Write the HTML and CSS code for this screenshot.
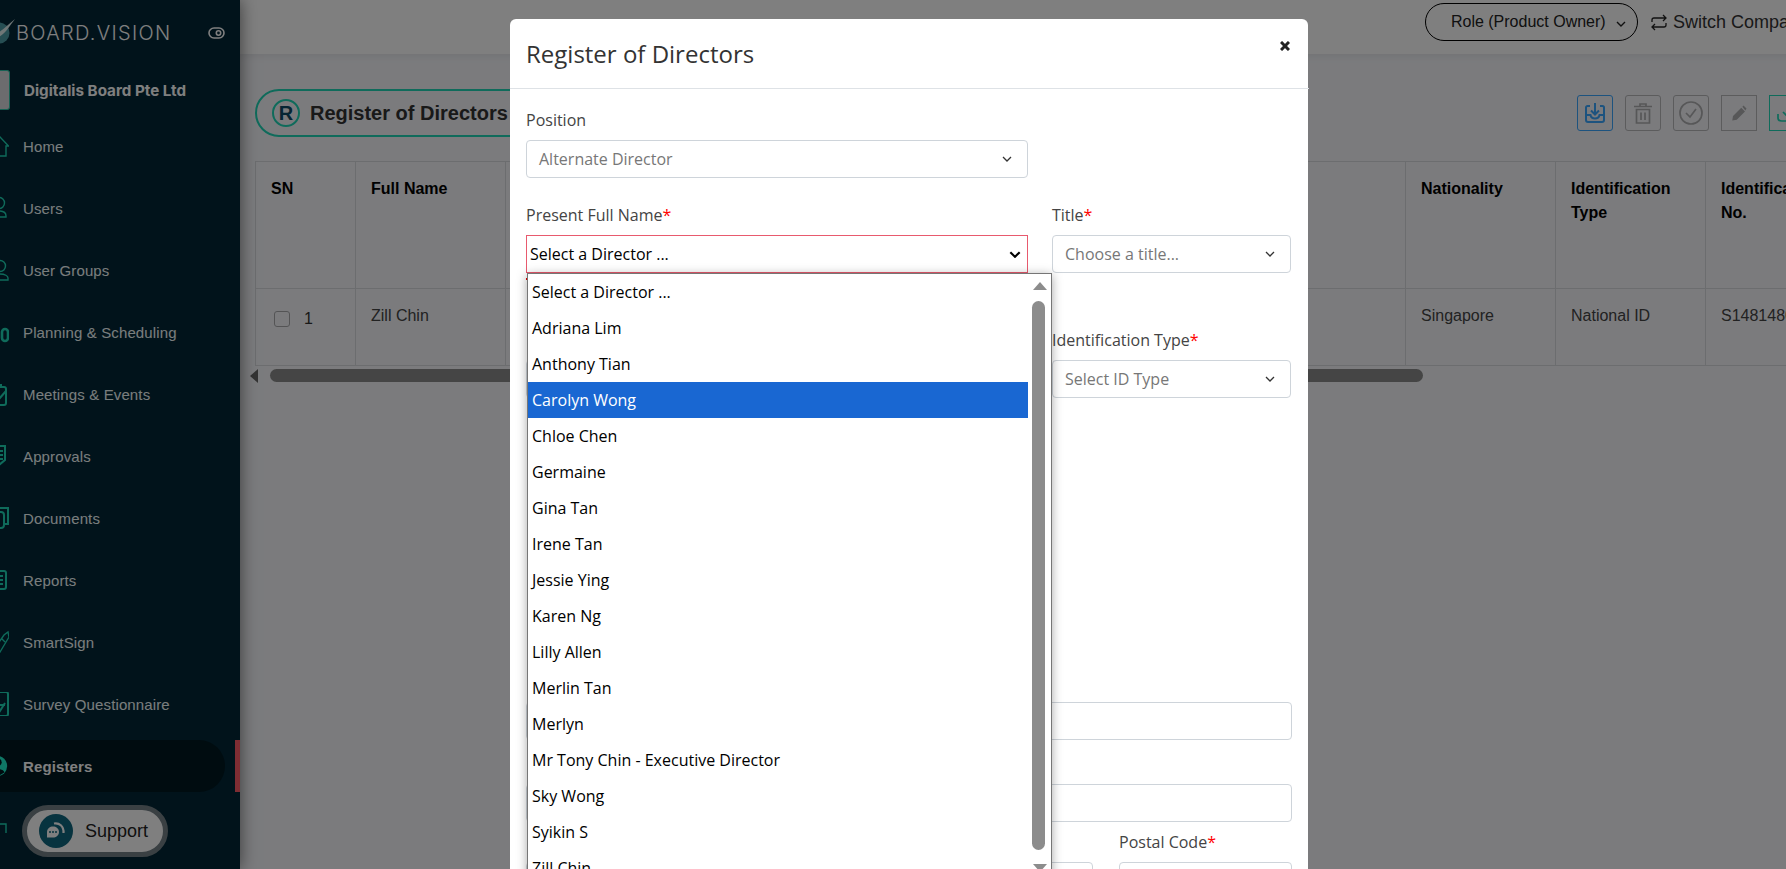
FILE: index.html
```html
<!DOCTYPE html>
<html lang="en">
<head>
<meta charset="utf-8">
<title>Register of Directors</title>
<link rel="stylesheet" href="styles.css">
</head>
<body>
<div class="app">
  <aside class="sidebar">
    <div class="brand">
      <svg class="brand-mark" viewBox="0 0 30 30"><circle cx="13" cy="17" r="10.5" class="brand-disc"/><path d="M3 19C12 20 20 10 29 3 22 12 16 24 5 22Z" class="brand-swoosh"/></svg>
      <span class="brand-name">BOARD.VISION</span>
      <svg class="brand-eye" viewBox="0 0 17 12"><rect x="1" y="1" width="15" height="10" rx="5" class="eye-line"/><circle cx="10.5" cy="6" r="2.2" class="eye-line"/></svg>
    </div>
    <div class="company">
      <div class="company-logo"></div>
      <span class="company-name">Digitalis Board Pte Ltd</span>
    </div>
    <nav class="nav">
      <a class="nav-item"><svg class="nav-ico" viewBox="0 0 22 24"><path d="M13 3 21.5 12H19V22H7V12H4.5Z"/></svg><span>Home</span></a>
      <a class="nav-item"><svg class="nav-ico" viewBox="0 0 22 24"><circle cx="12" cy="7" r="5.5"/><path d="M3 21V19C3 16 7 15 12 15S19 17 19 20V21Z"/></svg><span>Users</span></a>
      <a class="nav-item"><svg class="nav-ico" viewBox="0 0 22 24"><circle cx="13" cy="8" r="5.5"/><path d="M4 22V20C4 17 8 16 13 16S21 18 21 20V22Z"/></svg><span>User Groups</span></a>
      <a class="nav-item"><svg class="nav-ico nav-ico-heavy" viewBox="0 0 22 24"><rect x="15" y="9" width="6" height="12" rx="3"/><path d="M11 4V1"/></svg><span>Planning &amp; Scheduling</span></a>
      <a class="nav-item"><svg class="nav-ico nav-ico-bold" viewBox="0 0 22 24"><rect x="3" y="5" width="16" height="18" rx="2"/><path d="M14 2V6M6 13 12 17 19 9"/></svg><span>Meetings &amp; Events</span></a>
      <a class="nav-item"><svg class="nav-ico nav-ico-bold" viewBox="0 0 22 24"><path d="M3 2H18V16L12 21 3 16Z"/><path d="M12 7H16M12 11H16M12 15H16"/></svg><span>Approvals</span></a>
      <a class="nav-item"><svg class="nav-ico nav-ico-bold" viewBox="0 0 22 24"><path d="M6 6V2H21V18H17"/><rect x="3" y="6" width="14" height="16" rx="3"/></svg><span>Documents</span></a>
      <a class="nav-item"><svg class="nav-ico nav-ico-bold" viewBox="0 0 22 24"><rect x="3" y="3" width="16" height="18" rx="2"/><path d="M11 8H16M11 12H16M11 16H16"/></svg><span>Reports</span></a>
      <a class="nav-item"><svg class="nav-ico" viewBox="0 0 22 24"><path d="M21 2 22 7 13 22 8 18 17 5ZM15 9 18 12"/></svg><span>SmartSign</span></a>
      <a class="nav-item"><svg class="nav-ico nav-ico-bold" viewBox="0 0 22 24"><rect x="3" y="0" width="18" height="24" rx="2"/><path d="M9 15 13 19 18 11M12 13H18"/></svg><span>Survey Questionnaire</span></a>
      <a class="nav-item nav-item-active"><svg class="nav-ico nav-ico-fill" viewBox="0 0 24 24"><circle cx="11" cy="12" r="11"/><circle cx="12" cy="8" r="4" class="ico-cut"/><path d="M4 19C6 14 18 14 19 19L14 22H8Z" class="ico-cut"/></svg><span>Registers</span></a>
      <a class="nav-item"><svg class="nav-ico" viewBox="0 0 22 24"><path d="M10 17V8H19V17"/></svg><span class="nav-hidden"></span></a>
    </nav>
  </aside>

  <main class="main">
    <header class="topbar">
      <button class="role-pill"><span>Role (Product Owner)</span><svg class="chev-sm" viewBox="0 0 10 6"><path d="M1 1 5 5 9 1"/></svg></button>
      <a class="switch"><svg class="switch-ico" viewBox="0 0 16 17"><path d="M1 8V6C1 4.500 2 4 3 4H15M12 1 15 4 12 7M15 9V11C15 12.500 14 13 13 13H1M4 10 1 13 4 16"/></svg><span>Switch Company</span></a>
    </header>
    <div class="page">
      <div class="page-head">
        <div class="title-pill">
          <span class="title-badge">R</span>
          <h1 class="title-text">Register of Directors</h1>
        </div>
        <div class="toolbar">
          <button class="tool tool-blue"><svg viewBox="0 0 24 24"><path d="M7 5H4.500C3.700 5 3 5.700 3 6.500V19C3 20.100 3.900 21 5 21H19C20.100 21 21 20.100 21 19V6.500C21 5.700 20.300 5 19.500 5H17M12 2V13M8 9.500 12 13.500 16 9.500M3 14H7.500C8 16.500 9.500 17.500 12 17.500S16 16.500 16.500 14H21"/></svg></button>
          <button class="tool tool-grey"><svg viewBox="0 0 24 24"><path d="M3 5.500H21M9 5V3H15V5M5.500 8.500H18.500V22H5.500ZM10 11.500V19M14 11.500V19"/></svg></button>
          <button class="tool tool-grey"><svg viewBox="0 0 24 24"><circle cx="12" cy="12" r="11"/><path d="M7 12 11 16 17 8"/></svg></button>
          <button class="tool tool-grey tool-square"><svg class="tool-pencil" viewBox="0 0 24 24"><path class="solid" d="M3 22 4 16 15 5 20 10 9 21ZM16.500 3.500 18 2 22 6 20.500 8.500Z"/></svg></button>
          <button class="tool tool-teal tool-square"><svg viewBox="0 0 24 24"><path d="M3 13V17C3 19.500 5 20 7 20H17C19 20 21 19 21 17V13M12 4V15M8 11 12 15 16 11"/></svg></button>
        </div>
      </div>

      <table class="grid">
        <colgroup>
          <col class="col-sn"><col class="col-w"><col class="col-w"><col class="col-w"><col class="col-w"><col class="col-w"><col class="col-w"><col class="col-w"><col class="col-w"><col class="col-w"><col class="col-w">
        </colgroup>
        <thead>
          <tr>
            <th>SN</th><th>Full Name</th><th></th><th></th><th></th><th></th><th></th><th></th><th>Nationality</th><th>Identification Type</th><th>Identification No.</th>
          </tr>
        </thead>
        <tbody>
          <tr>
            <td class="cell-sn"><span class="check"></span><span class="sn-num">1</span></td><td>Zill Chin</td><td></td><td></td><td></td><td></td><td></td><td></td><td>Singapore</td><td>National ID</td><td>S1481480A</td>
          </tr>
        </tbody>
      </table>
      <div class="hscroll">
        <span class="hscroll-arrow"></span>
        <span class="hscroll-thumb"></span>
      </div>
    </div>
  </main>
</div>

<button class="support"><span class="support-ico"><svg viewBox="0 0 24 24"><path class="support-bubble" d="M3 13C3 9.500 6 7.500 9 7.500S15 9.500 15 13 12 18.500 9 18.500H3Z"/><path class="support-arc" d="M10 4.500C15 3.500 20 7 19.500 14"/><circle class="support-dot" cx="6" cy="13" r="1"/><circle class="support-dot" cx="9" cy="13" r="1"/><circle class="support-dot" cx="12" cy="13" r="1"/></svg></span><span>Support</span></button>

<div class="backdrop"></div>

<section class="modal">
  <div class="modal-head">
    <h2 class="modal-title">Register of Directors</h2>
    <svg class="modal-close" viewBox="0 0 10 10"><path d="M1 1 9 9M9 1 1 9"/></svg>
  </div>
  <div class="modal-body">
    <div class="row row-a">
      <div class="field field-main">
        <label class="label">Position</label>
        <div class="control is-muted"><span>Alternate Director</span><svg class="chev" viewBox="0 0 10 6"><path d="M1 1 5 5 9 1"/></svg></div>
      </div>
    </div>
    <div class="row row-b">
      <div class="field field-main">
        <label class="label">Present Full Name<span class="req">*</span></label>
        <div class="combo">
          <div class="control control-open"><span>Select a Director ...</span><svg class="chev chev-bold" viewBox="0 0 10 6"><path d="M1 1 5 5 9 1"/></svg></div>
          <div class="listbox">
            <ul class="options">
              <li>Select a Director ...</li>
              <li>Adriana Lim</li>
              <li>Anthony Tian</li>
              <li class="is-active">Carolyn Wong</li>
              <li>Chloe Chen</li>
              <li>Germaine</li>
              <li>Gina Tan</li>
              <li>Irene Tan</li>
              <li>Jessie Ying</li>
              <li>Karen Ng</li>
              <li>Lilly Allen</li>
              <li>Merlin Tan</li>
              <li>Merlyn</li>
              <li>Mr Tony Chin - Executive Director</li>
              <li>Sky Wong</li>
              <li>Syikin S</li>
              <li>Zill Chin</li>
            </ul>
            <div class="list-scroll">
              <span class="arrow-up"></span>
              <span class="list-thumb"></span>
              <span class="arrow-down"></span>
            </div>
          </div>
        </div>
        <div class="error"></div>
      </div>
      <div class="field field-side">
        <label class="label">Title<span class="req">*</span></label>
        <div class="control is-muted"><span>Choose a title...</span><svg class="chev" viewBox="0 0 10 6"><path d="M1 1 5 5 9 1"/></svg></div>
      </div>
    </div>
    <div class="row row-c">
      <div class="field field-main">
        <div class="label label-blank"></div>
        <div class="control"></div>
      </div>
      <div class="field field-side">
        <label class="label">Identification Type<span class="req">*</span></label>
        <div class="control is-muted"><span>Select ID Type</span><svg class="chev" viewBox="0 0 10 6"><path d="M1 1 5 5 9 1"/></svg></div>
      </div>
    </div>
    <div class="field row-d">
      <div class="label label-blank"></div>
      <div class="control"></div>
    </div>
    <div class="field row-e">
      <div class="label label-blank"></div>
      <div class="control"></div>
    </div>
    <div class="row row-f">
      <div class="field field-city">
        <div class="label label-blank"></div>
        <div class="control"></div>
      </div>
      <div class="field field-postal">
        <label class="label">Postal Code<span class="req">*</span></label>
        <div class="control"></div>
      </div>
    </div>
  </div>
</section>
</body>
</html>
```
FILE: styles.css
```css
* { box-sizing: border-box; }
html, body { margin: 0; height: 100%; overflow: hidden; }
body { font-family: "Liberation Sans", Arial, sans-serif; font-size: 16px; color: #444; background: #f6f7fb; }
button { font: inherit; background: none; padding: 0; }
h1, h2, p, ul { margin: 0; padding: 0; }

.app { display: flex; height: 869px; width: 1786px; overflow: hidden; }

/* sidebar */
.sidebar { width: 240px; flex: none; background: #022636; position: relative; z-index: 1; box-shadow: 0 0 16px rgba(0,0,0,.55); }
.brand { display: flex; align-items: center; height: 66px; margin-left: -14px; }
.brand-mark { width: 30px; height: 30px; flex: none; margin-top: -4px; }
.brand-disc { fill: #4d9ca6; }
.brand-swoosh { fill: #dfeeee; }
.brand-name { font-family: Inter, sans-serif; font-weight: 300; font-size: 20px; letter-spacing: 1.3px; color: #fff; }
.brand-eye { width: 17px; height: 12px; margin-left: auto; margin-right: 15px; }
.eye-line { fill: none; stroke: #fff; stroke-width: 1.6; }
.company { display: flex; align-items: center; height: 40px; margin-top: 4px; }
.company-logo { width: 10px; height: 40px; flex: none; background: #d8d8dc; border: 1px solid #2fc4a8; border-left: 0; border-radius: 0 3px 3px 0; }
.company-name { font-family: Inter, sans-serif; font-weight: 700; font-size: 15.2px; color: #fff; margin-left: 14px; white-space: nowrap; }
.nav { margin-top: 5px; }
.nav-item { display: flex; align-items: center; height: 62px; margin-left: -13px; color: #f2fbfb; font-size: 15px; letter-spacing: .13px; position: relative; }
.nav-ico { width: 22px; height: 24px; flex: none; margin-right: 14px; fill: none; stroke: #1ed6b6; stroke-width: 1.4; }
.nav-ico-bold { stroke-width: 2; }
.nav-ico-heavy { stroke-width: 2.6; }
.nav-ico-fill { width: 22px; fill: #1ef0cc; stroke: none; }
.ico-cut { fill: #001820; }
.nav-item-active { font-weight: 700; color: #fff; }
.nav-item-active::before { content: ""; position: absolute; left: 0; top: 5px; bottom: 5px; width: 238px; background: #001820; border-radius: 0 26px 26px 0; }
.nav-item-active::after { content: ""; position: absolute; left: 248px; top: 5px; bottom: 5px; width: 5px; background: #ff5a66; }
.nav-item-active > * { position: relative; z-index: 1; }

/* main */
.main { flex: 1; min-width: 0; overflow: hidden; }
.topbar { display: flex; align-items: center; justify-content: flex-end; height: 54px; width: 1590px; background: #fff; padding-bottom: 10px; box-shadow: 0 2px 8px rgba(0,0,0,.08); position: relative; }
.role-pill { display: flex; align-items: center; height: 38px; width: 213px; border: 1.5px solid #000; border-radius: 19px; padding-left: 25px; color: #222; }
.chev-sm { width: 10px; height: 6px; margin-left: 10px; margin-top: 3px; fill: none; stroke: #222; stroke-width: 1.4; }
.switch { display: flex; align-items: center; margin-left: 13px; font-size: 18px; color: #333; white-space: nowrap; margin-right: 22px; }
.switch-ico { width: 16px; height: 17px; margin-right: 6px; fill: none; stroke: #222; stroke-width: 1.3; }

.page { padding: 35px 0 0 15px; width: 1800px; }
.page-head { display: flex; justify-content: space-between; align-items: center; height: 48px; width: 1550px; }
.title-pill { display: flex; align-items: center; width: 330px; height: 48px; border: 2px solid #1ed6b6; border-radius: 24px; padding-left: 15px; background: #f6f7fb; }
.title-badge { width: 28px; height: 28px; flex: none; border: 2.5px solid #1ed6b6; border-radius: 50%; color: #0c4a66; font-weight: 700; font-size: 20px; display: flex; align-items: center; justify-content: center; margin-right: 10px; }
.title-text { font-size: 20px; font-weight: 700; color: #333; white-space: nowrap; }
.toolbar { display: flex; gap: 12px; }
.tool { width: 36px; height: 36px; border: 1.5px solid #bbb; border-radius: 3px; display: flex; align-items: center; justify-content: center; }
.tool svg { width: 24px; height: 24px; fill: none; stroke-width: 1.7; }
.tool-blue { border-color: #3aa6ff; }
.tool-blue svg { stroke: #3aa6ff; stroke-width: 2; }
.tool-grey { border-color: #b8b8ba; }
.tool-grey svg { stroke: #aeaeb0; }
.tool-square { border-radius: 0; border-width: 1px; }
.tool svg.tool-pencil { width: 18px; height: 18px; }
.solid { fill: #aeaeb0; stroke: none; }
.tool-teal { border-color: #1ed6b6; }
.tool-teal svg { stroke: #1ed6b6; }

.grid { border-collapse: collapse; table-layout: fixed; width: 1600px; margin-top: 24px; }
.col-sn { width: 100px; }
.col-w { width: 150px; }
.grid th, .grid td { border: 1px solid #d9dbdf; padding: 15px 15px; vertical-align: top; text-align: left; line-height: 24px; font-size: 16px; }
.grid th { height: 127px; color: #000; font-weight: 700; }
.grid td { height: 77px; color: #444; }
.grid .cell-sn { padding-top: 18px; padding-left: 18px; }
.check { display: inline-block; width: 16px; height: 16px; border: 1px solid #a9a9ab; border-radius: 3px; vertical-align: -3px; margin-right: 14px; }
.sn-num { color: #333; }
.hscroll { display: flex; align-items: center; height: 23px; width: 1300px; padding-bottom: 4px; }
.hscroll-arrow { width: 0; height: 0; margin-left: -5px; border-style: solid; border-width: 7px 8px 7px 0; border-color: transparent #666 transparent transparent; }
.hscroll-thumb { width: 1153px; height: 13px; margin-left: 12px; background: #8a8a8a; border-radius: 7px; }

/* support */
.support { position: fixed; left: 22px; top: 805px; width: 146px; height: 52px; display: flex; align-items: center; background: #fff; border: 5px solid #748086; border-radius: 26px; padding-left: 12px; font-size: 18px; color: #222; z-index: 2; }
.support-ico { width: 34px; height: 34px; border-radius: 50%; background: #0e667e; display: flex; align-items: center; justify-content: center; margin-right: 12px; flex: none; }
.support-ico svg { width: 24px; height: 24px; }
.support-bubble { fill: #fff; }
.support-arc { fill: none; stroke: #fff; stroke-width: 2.2; }
.support-dot { fill: #0e667e; }

/* modal */
.backdrop { position: fixed; inset: 0; background: rgba(0,0,0,.5); z-index: 3; }
.modal { position: fixed; left: 510px; top: 19px; width: 798px; height: 880px; background: #fff; border-radius: 6px 6px 0 0; z-index: 4; font-family: "Open Sans", sans-serif; }
.modal-head { display: flex; justify-content: space-between; align-items: flex-start; height: 70px; border-bottom: 1px solid #dee2e6; padding: 16px 19px 0 16px; margin-right: -1px; }
.modal-title { font-size: 24px; font-weight: 400; line-height: 38px; color: #333; }
.modal-close { width: 10px; height: 10px; margin-top: 6px; fill: none; stroke: #222; stroke-width: 3; }
.modal-body { padding: 19px 16px 0 16px; }
.row { display: flex; gap: 24px; }
.row-a { margin-bottom: 25px; }
.field-main { width: 502px; flex: none; }
.field-side { width: 239px; flex: none; }
.label { display: block; height: 24px; line-height: 24px; margin-bottom: 8px; color: #444; font-size: 16px; white-space: nowrap; }
.req { color: #f00; }
.control { display: flex; align-items: center; justify-content: space-between; height: 38px; border: 1px solid #ced4da; border-radius: 4px; padding: 0 15px 0 12px; font-size: 16px; color: #333; background: #fff; }
.is-muted { color: #777; }
.chev { width: 10px; height: 6px; flex: none; fill: none; stroke: #333; stroke-width: 1.3; }
.chev-bold { width: 12px; height: 7px; stroke: #000; stroke-width: 1.8; }
.control-open { border: 1px solid #e85a6e; border-radius: 0; color: #000; padding: 0 6px 0 3px; height: 38px; }
.combo { position: relative; }
.listbox { position: absolute; left: 1px; top: 100%; width: 525px; height: 607px; display: flex; background: #fff; border: 1px solid #767676; box-shadow: 0 2px 10px rgba(0,0,0,.35); z-index: 5; overflow: hidden; }
.options { list-style: none; width: 500px; flex: none; color: #000; font-size: 16px; }
.options li { height: 36px; line-height: 36px; padding-left: 4px; white-space: nowrap; }
.options .is-active { background: #1967d2; color: #fff; }
.list-scroll { flex: 1; display: flex; flex-direction: column; align-items: center; }
.arrow-up, .arrow-down { width: 0; height: 0; border-style: solid; border-color: transparent; flex: none; }
.arrow-up { border-width: 0 7.5px 8px; border-bottom-color: #8c8c8c; margin-top: 8px; }
.arrow-down { border-width: 8px 7.5px 0; border-top-color: #8c8c8c; margin-top: 14px; }
.list-thumb { width: 13px; height: 549px; background: #8c8c8c; border-radius: 7px; margin: 11px 0 0 -2px; flex: none; }
.error { height: 2px; margin-top: 5px; margin-bottom: 48px; width: 3px; background: #e00; }
.row-c { height: 342px; }
.row-d { width: 766px; }
.row-e { width: 766px; margin-top: 12px; }
.row-f { margin-top: 8px; gap: 26px; }
.field-city { width: 567px; flex: none; }
.field-postal { width: 173px; flex: none; }
```
